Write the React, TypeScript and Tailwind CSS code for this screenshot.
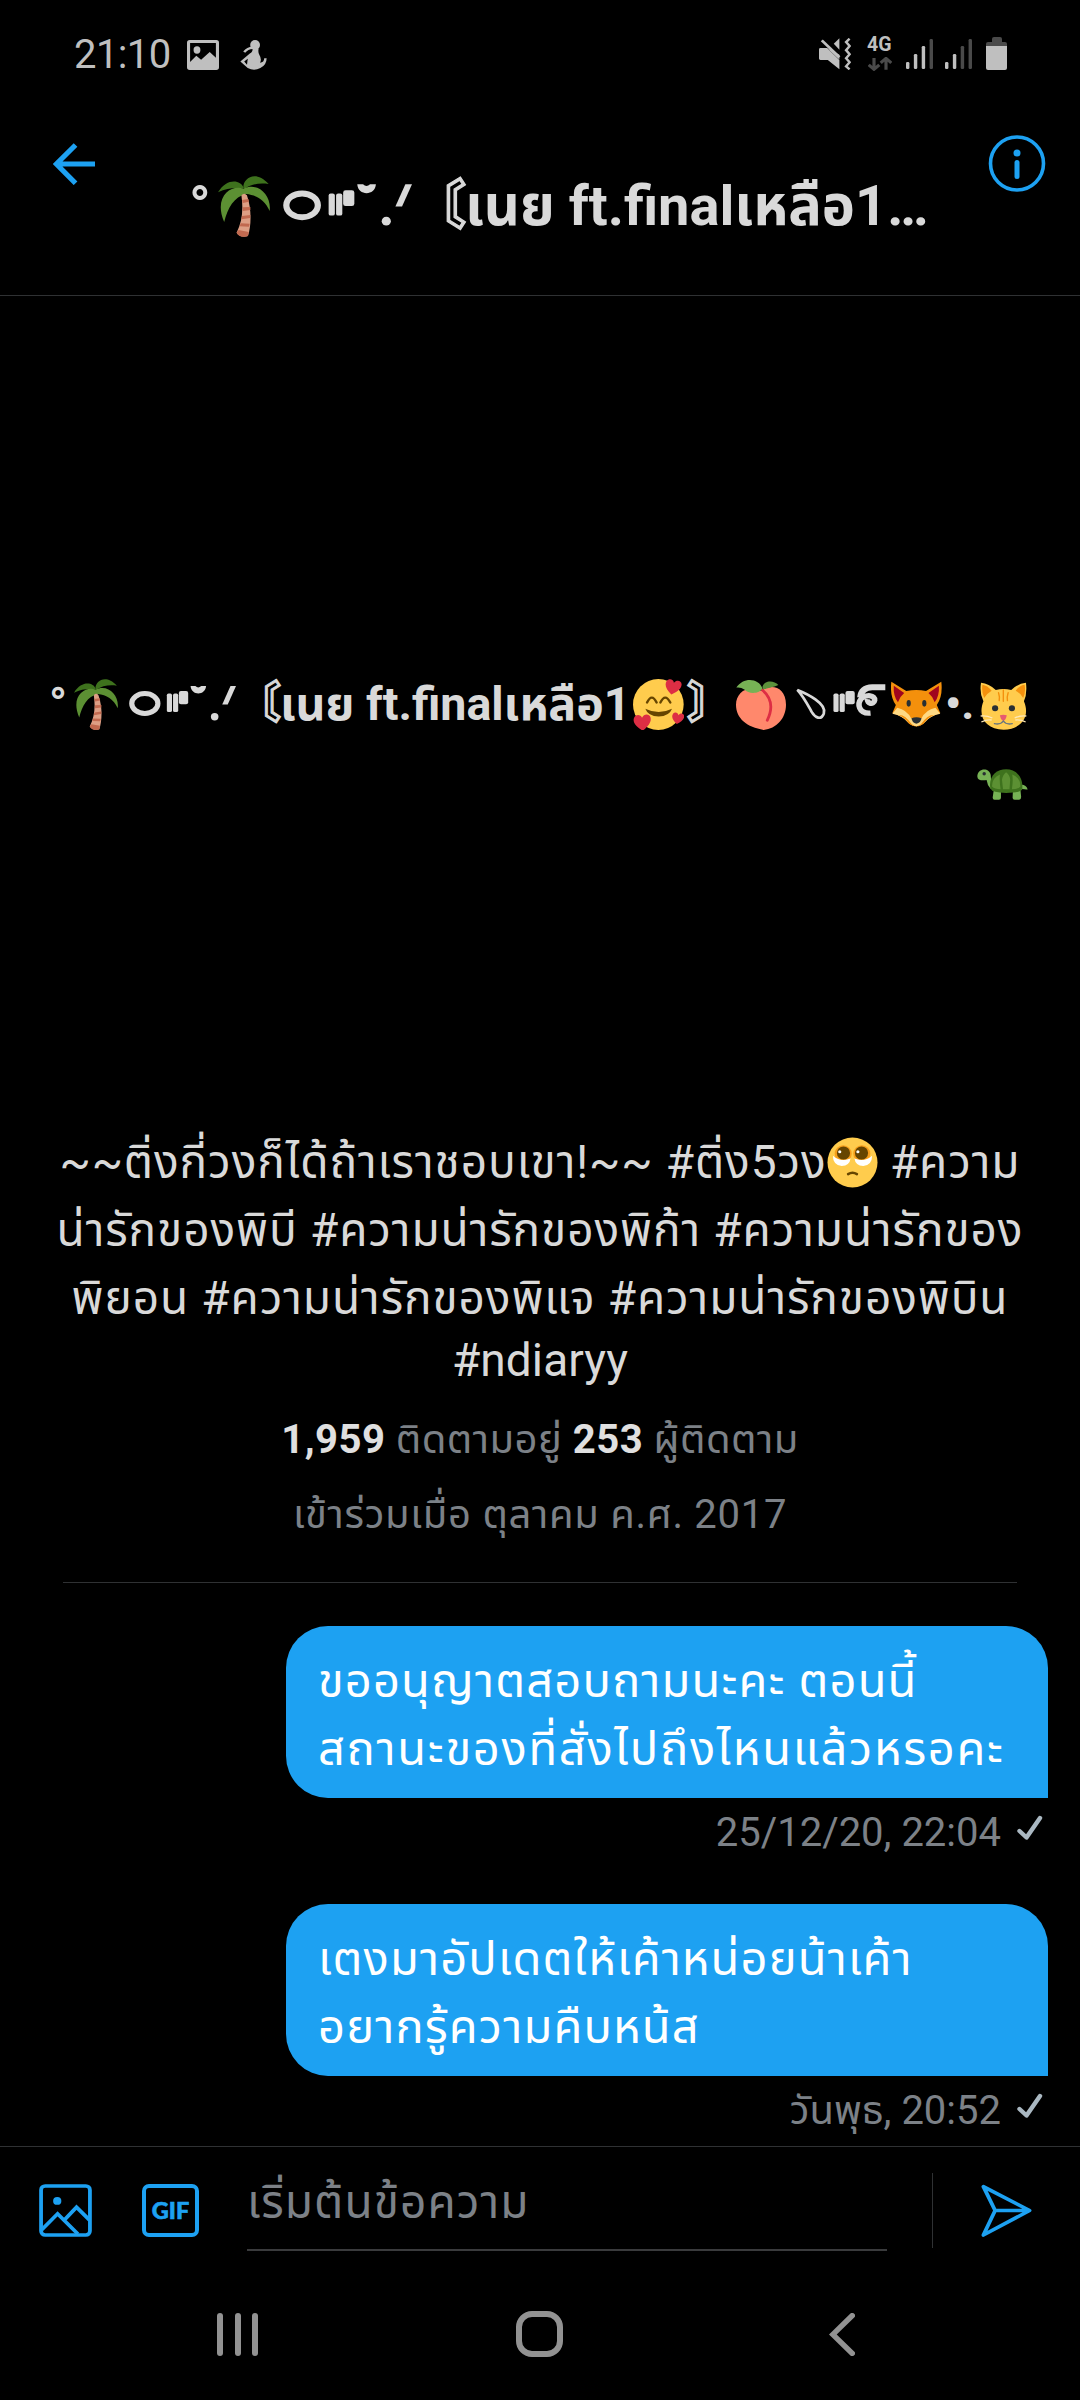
import React from 'react';

type SvgProps = { className?: string };

const Palm = ({ className }: SvgProps) => (
  <svg className={className} viewBox="634 528 151 183" fill="none" preserveAspectRatio="none">
    <path d="M708 562C700 540 660 532 634 577C660 565 685 562 708 566Z" fill="#3E721D" />
    <path d="M708 564C704 540 740 505 781 552C755 548 730 552 712 566Z" fill="#3E721D" />
    <path d="M708 566C672 552 620 590 652 666C662 625 680 590 716 582C745 585 770 600 784 633C790 585 750 545 708 566Z" fill="#5C9033" />
    <path d="M702 586C708 630 704 665 688 698C694 711 712 712 721 708C730 680 733 630 718 586Q710 576 702 586Z" fill="#DD9E84" />
    <path d="M704 600l18-3 2 8-18 4zM706 622l22-1 0 9-22 3zM704 648l24-3-1 9-25 4zM700 670l26 1-2 9-27-1zM688 698l6-8 29 6-2 12c-10 4-26 4-33-10z" fill="#C1694F" />
  </svg>
);

/* Ring, bars, breve, dot and stroke that decorate the display name. */
const Flourish = ({ className }: SvgProps) => (
  <svg className={className} viewBox="374 86 311 154" fill="#d9d9d9" preserveAspectRatio="none">
    <ellipse cx="420" cy="160" rx="38" ry="30" fill="none" stroke="#d9d9d9" strokeWidth="15" />
    <rect x="484" y="130" width="15" height="56" rx="5" />
    <rect x="502" y="130" width="15" height="56" rx="5" />
    <rect x="519" y="122" width="27" height="40" rx="6" />
    <path d="M553 107h14q8 9 17 0h14c-2 30-43 30-45 0z" />
    <circle cx="623" cy="200" r="11" />
    <path d="M669 107h16l-24 56h-16z" />
  </svg>
);

const Heart = ({ t }: { t: string }) => (
  <path transform={t} d="M0 24C-18 12-26 0-22-12C-17-24-3-22 0-12C5-23 20-24 23-12C26 1 14 14 0 24Z" fill="#DD2E44" />
);

const Smiling = ({ className }: SvgProps) => (
  <svg className={className} viewBox="270 86 149 154" fill="none" preserveAspectRatio="none">
    <ellipse cx="344" cy="163" rx="74" ry="77" fill="#FFCC4D" />
    <path d="M311 157q14-30 28 0M350 157q14-30 29 0" stroke="#664500" strokeWidth="7" strokeLinecap="round" />
    <path d="M306 176q39 20 78 0q-8 23-39 23t-39-23z" fill="#664500" />
    <Heart t="translate(387 109) rotate(12)" />
    <Heart t="translate(297 216) rotate(-3) scale(1.08)" />
    <Heart t="translate(401 204) rotate(10) scale(.75)" />
  </svg>
);

const Peach = ({ className }: SvgProps) => (
  <svg className={className} viewBox="568 86 144 154" fill="none" preserveAspectRatio="none">
    <path d="M641 122C665 100 712 106 712 164C712 206 684 236 648 240C600 232 568 206 568 164C568 125 604 102 641 122Z" fill="#FF886C" />
    <path d="M644 119q40 36 14 92" stroke="#DD2E44" strokeWidth="8" strokeLinecap="round" />
    <path d="M644 110C650 88 678 90 690 104C676 112 660 112 646 118Z" fill="#5C913B" />
    <path d="M569 112C590 78 634 84 644 114C638 130 606 134 592 118Q582 110 569 112Z" fill="#77B255" />
  </svg>
);

/* Petal, bars and curl between the peach and the fox. */
const Curl = ({ className }: SvgProps) => (
  <svg className={className} viewBox="744 86 262 154" fill="#d9d9d9" preserveAspectRatio="none">
    <path d="M748 119C775 130 835 160 825 190C817 212 800 203 790 186C775 158 765 138 748 119Z" fill="none" stroke="#d9d9d9" strokeWidth="8" />
    <rect x="853" y="130" width="15" height="56" rx="5" />
    <rect x="871" y="130" width="15" height="56" rx="5" />
    <rect x="888" y="122" width="27" height="40" rx="6" />
    <path d="M1004 111H966Q934 112 931 142" fill="none" stroke="#d9d9d9" strokeWidth="18" />
    <path d="M961 189C925 192 922 160 934 145C950 132 974 134 973 150C970 166 950 160 952 147" fill="none" stroke="#d9d9d9" strokeWidth="16" />
  </svg>
);

const Fox = ({ className }: SvgProps) => (
  <svg className={className} viewBox="1018 94 147 138" fill="none" preserveAspectRatio="none">
    <path d="M1019 96L1062 124Q1091 118 1119 124L1163 96Q1168 140 1150 166L1160 190Q1130 200 1116 214Q1091 236 1066 214Q1052 200 1022 190L1032 166Q1014 140 1019 96Z" fill="#F4900C" />
    <path d="M1026 108L1056 130Q1044 140 1038 158Q1024 138 1026 108ZM1156 108L1126 130Q1138 140 1144 158Q1158 138 1156 108Z" fill="#A0041E" />
    <path d="M1022 192L1036 174Q1064 180 1076 206H1106Q1118 180 1146 174L1160 192Q1130 198 1116 218Q1091 242 1066 218Q1052 198 1022 192Z" fill="#FFD983" />
    <path d="M1040 196Q1058 194 1078 224L1091 232L1104 224Q1124 194 1142 196Q1124 204 1112 222Q1091 238 1070 222Q1058 204 1040 196Z" fill="#F4900C" />
    <ellipse cx="1069" cy="161" rx="6" ry="10" fill="#292F33" />
    <ellipse cx="1114" cy="161" rx="6" ry="10" fill="#292F33" />
    <path d="M1077 206Q1091 200 1106 206Q1104 220 1091 222Q1079 220 1077 206Z" fill="#292F33" />
  </svg>
);

const Cat = ({ className }: SvgProps) => (
  <svg className={className} viewBox="1276 94 137 144" fill="none" preserveAspectRatio="none">
    <path d="M1279 96Q1302 98 1322 118Q1344 112 1367 118Q1388 98 1410 96Q1414 130 1404 152C1424 200 1394 236 1345 237C1294 236 1268 200 1286 152Q1274 128 1279 96Z" fill="#FFCC4D" />
    <path d="M1283 102Q1298 104 1310 120Q1296 128 1288 142Q1280 124 1283 102ZM1406 102Q1391 104 1380 120Q1394 128 1402 142Q1410 124 1406 102Z" fill="#F4900C" />
    <path d="M1344 118v34M1330 126q4 12 2 24M1358 126q-4 12-2 24" stroke="#F4900C" strokeWidth="4" strokeLinecap="round" />
    <circle cx="1320" cy="173" r="9" fill="#292F33" />
    <circle cx="1369" cy="173" r="9" fill="#292F33" />
    <path d="M1334 194q10-4 20 0q-2 14-10 17q-8-3-10-17z" fill="#E75A70" />
    <path d="M1318 219q18 4 26-8q8 12 26 8" stroke="#66757F" strokeWidth="4" strokeLinecap="round" />
    <path d="M1278 196q18-2 34 6M1280 214q14-8 30-6M1411 196q-18-2-34 6M1409 214q-14-8-30-6" stroke="#FFE8B6" strokeWidth="4" />
  </svg>
);

const Turtle = ({ className }: SvgProps) => (
  <svg className={className} viewBox="1269 356 149 92" fill="none" preserveAspectRatio="none">
    <path d="M1270 378C1270 352 1306 350 1309 374C1311 392 1309 402 1318 414L1308 414Q1299 404 1297 389Q1270 392 1270 378Z" fill="#77B255" />
    <circle cx="1290" cy="370" r="5" fill="#292F33" />
    <path d="M1398 402Q1414 404 1417 417Q1402 418 1392 410Z" fill="#77B255" />
    <path d="M1318 418h21v23q0 6-6 6h-13q-6 0-5-8zM1374 418h22l2 21q0 8-6 8h-13q-6 0-6-6z" fill="#77B255" />
    <path d="M1308 414C1302 378 1325 357 1354 357C1384 357 1405 380 1401 416Q1396 427 1354 427Q1314 427 1308 414Z" fill="#3E721D" />
    <path d="M1313 408Q1312 382 1336 372Q1334 390 1338 416Q1320 416 1313 408ZM1354 366Q1365 374 1366 388L1364 416H1345L1342 388Q1344 374 1354 366ZM1396 408Q1396 382 1372 372Q1375 390 1371 416Q1390 416 1396 408Z" fill="#5C9033" />
  </svg>
);

const Pleading = ({ className }: SvgProps) => (
  <svg className={className} viewBox="0 0 52 52" fill="none">
    <circle cx="26" cy="26" r="25.500" fill="#FFCC4D" />
    <circle cx="16.500" cy="17" r="8.700" fill="#F4900C" opacity=".75" />
    <circle cx="35.500" cy="17" r="8.700" fill="#F4900C" opacity=".75" />
    <path d="M6 19Q14 26 24 22Q23 29.500 15 29.500Q6 28.500 6 19ZM46 19Q38 26 28 22Q29 29.500 37 29.500Q46 28.500 46 19Z" fill="#fff" />
    <circle cx="16.800" cy="16.300" r="6.700" fill="#664500" />
    <circle cx="35.200" cy="16.300" r="6.700" fill="#664500" />
    <circle cx="13" cy="15" r="1.600" fill="#fff" />
    <circle cx="31.500" cy="15" r="1.600" fill="#fff" />
    <path d="M21.500 37.800Q26 35 30.500 37.800" stroke="#664500" strokeWidth="2.600" strokeLinecap="round" />
  </svg>
);

const StatusBar = () => (
  <div className="flex h-[110px] shrink-0 items-start pl-[74px] pr-[72px] pt-[36px] text-[#bfbfbf]">
    <span className="w-[113px] whitespace-nowrap text-[40px] leading-[38px] tracking-[-0.6px]">21:10</span>
    <svg className="mt-[4px] h-[30px] w-[32px]" viewBox="543 119 93 90" fill="#bfbfbf" preserveAspectRatio="none">
      <path fillRule="evenodd" d="M551 119h77q8 0 8 8v74q0 8-8 8h-77q-8 0-8-8v-74q0-8 8-8zM552 128v57l18-19 14 12 25-23 18 17v-44z" />
      <ellipse cx="572" cy="149" rx="10" ry="11" />
    </svg>
    <svg className="ml-[21px] mt-[4px] h-[30px] w-[27px]" viewBox="696 119 77 91" fill="#bfbfbf" preserveAspectRatio="none">
      <ellipse cx="739" cy="134" rx="14" ry="15" />
      <path d="M732 146h17q-2 10 2 18q8 14 2 24q12-2 12-14h7q0 20-18 30q-18 10-36 0L697 184L724 160Q732 156 732 146zM708 184l8 10 2-18z" fillRule="evenodd" />
      <path d="M708 156q10-14 26-13" stroke="#bfbfbf" strokeWidth="7" fill="none" />
    </svg>
    <div className="grow" />
    <svg className="mt-[2px] h-[32px] w-[32px]" viewBox="807 113 91 95" fill="#bfbfbf" preserveAspectRatio="none">
      <path d="M811 143h19l35 35v28l-33-28h-21q-4 0-4-4v-27q0-4 4-4z" />
      <path d="M830 143l35 20v14z" />
      <path d="M865 114v34l-16-18z" />
      <path d="M815 120l50 50" stroke="#bfbfbf" strokeWidth="8" />
      <path d="M894 115l-10 10 10 12-10 12 10 12-10 12 10 12-10 12 10 9" fill="none" stroke="#bfbfbf" strokeWidth="7" />
    </svg>
    <div className="ml-[17px] w-[26px]">
      <div className="-ml-px whitespace-nowrap text-[19.5px] font-bold leading-[18px]">4G</div>
      <svg className="mt-[3px] h-[14px] w-[24px]" viewBox="952 171 68 43" fill="none" stroke="#4a4a4a" strokeWidth="9" preserveAspectRatio="none">
        <path d="M969 174v34M954 195l15 14 15-14M1003 210v-34M988 189l15-14 15 14" />
      </svg>
    </div>
    <svg className="ml-[12px] mt-[3px] h-[30px] w-[27px]" viewBox="1062 118 79 90" fill="#bfbfbf" preserveAspectRatio="none">
      <rect x="1062" y="187" width="10" height="21" rx="4" /><rect x="1085" y="163" width="10" height="45" rx="4" />
      <rect x="1108" y="139" width="10" height="69" rx="4" /><rect x="1131" y="118" width="10" height="90" rx="4" fill="#4a4a4a" />
    </svg>
    <svg className="ml-[12px] mt-[3px] h-[30px] w-[27px]" viewBox="1062 118 79 90" fill="#bfbfbf" preserveAspectRatio="none">
      <rect x="1062" y="187" width="10" height="21" rx="4" /><rect x="1085" y="163" width="10" height="45" rx="4" />
      <rect x="1108" y="139" width="10" height="69" rx="4" fill="#4a4a4a" /><rect x="1131" y="118" width="10" height="90" rx="4" fill="#4a4a4a" />
    </svg>
    <div className="ml-[14px] mr-px mt-px flex w-[21px] flex-col items-center">
      <div className="h-[5px] w-[10px] rounded-t-[2px] bg-[#4a4a4a]" />
      <div className="h-[28px] w-full rounded-[2px] border-t-4 border-[#4a4a4a] bg-[#bfbfbf]" />
    </div>
  </div>
);

const Header = () => (
  <div className="flex h-[186px] shrink-0 items-start border-b border-[#2f3133]">
    <svg className="ml-[53px] mt-[33px] h-[42px] w-[42px]" viewBox="153 430 123 126" fill="none" stroke="#1da1f2" strokeWidth="15" preserveAspectRatio="none">
      <path d="M276 493H164M219 436L163 493L219 551" />
    </svg>
    <div className="ml-[94px] mt-[60px] flex h-[68px] w-[799px] items-start whitespace-nowrap text-[56px] font-bold leading-[72px] text-[#d9d9d9]">
      <span className="w-[29px] shrink-0">°</span>
      <Palm className="mt-[6px] h-[61px] w-[52px] shrink-0" />
      <Flourish className="ml-[13px] mt-[6px] h-[61px] w-[129px] shrink-0" />
      <span className="w-[53px] shrink-0 text-[54px] [-webkit-text-stroke:1.2px_#d9d9d9]">〘</span>
      <span>เนย ft.finalเหลือ1…</span>
    </div>
    <svg className="mt-[25px] h-[57px] w-[58px]" viewBox="0 0 58 57" fill="none">
      <circle cx="29" cy="28.500" r="26.500" stroke="#1da1f2" strokeWidth="3.600" />
      <circle cx="29" cy="18" r="3.500" fill="#1da1f2" />
      <path d="M29 27.500V41.500" stroke="#1da1f2" strokeWidth="5" strokeLinecap="round" />
    </svg>
  </div>
);

const Profile = () => (
  <div className="shrink-0 pt-[374px] text-[#d9d9d9]">
    <div className="flex h-[68px] items-start whitespace-nowrap pl-[49px] text-[46.5px] font-bold leading-[68px]">
      <span className="w-[25px] shrink-0">°</span>
      <Palm className="mt-[9px] h-[51px] w-[44px] shrink-0" />
      <Flourish className="ml-[11px] mt-[9px] h-[51px] w-[107px] shrink-0" />
      <span className="w-[44px] shrink-0 text-[45px] [-webkit-text-stroke:1px_#d9d9d9]">〘</span>
      <span className="w-[353px] shrink-0">เนย ft.finalเหลือ1</span>
      <Smiling className="mt-[9px] h-[51px] w-[51px] shrink-0" />
      <span className="ml-[3px] w-[49px] shrink-0 text-[45px] [-webkit-text-stroke:1px_#d9d9d9]">〙</span>
      <Peach className="mt-[9px] h-[51px] w-[50px] shrink-0" />
      <Curl className="ml-[10px] mt-[9px] h-[51px] w-[90px] shrink-0" />
      <Fox className="ml-[5px] mt-[11px] h-[46px] w-[51px] shrink-0" />
      <span className="ml-[3px] w-[35px] shrink-0 text-[45px]">•.</span>
      <Cat className="mt-[12px] h-[48px] w-[47px] shrink-0" />
    </div>
    <div className="flex justify-end pr-[52px] pt-[31px]">
      <Turtle className="h-[31px] w-[51px]" />
    </div>
    <div className="flex flex-col items-center whitespace-nowrap pt-[328px] text-[46px] leading-[68px] tracking-[0.9px]">
      <div className="flex h-[68px]">
        <span>~~ติ่งกี่วงก็ได้ถ้าเราชอบเขา!~~ #ติ่ง5วง</span>
        <Pleading className="mt-[9px] h-[51px] w-[51px]" />
        <span>&nbsp;#ความ</span>
      </div>
      <div>น่ารักของพิบี #ความน่ารักของพิก้า #ความน่ารักของ</div>
      <div>พิยอน #ความน่ารักของพิแจ #ความน่ารักของพิบิน</div>
      <div className="leading-[56px] tracking-[0.1px]">#ndiaryy</div>
      <div className="mt-[20px] text-[40px] leading-[64px] tracking-[0.5px] text-[#7c8187]">
        <b className="text-[#e0e0e0]">1,959</b> ติดตามอยู่ <b className="text-[#e0e0e0]">253</b> ผู้ติดตาม
      </div>
      <div className="mt-[11px] text-[40px] leading-[64px] tracking-[0.7px] text-[#7c8187]">เข้าร่วมเมื่อ ตุลาคม ค.ศ. 2017</div>
    </div>
    <div className="mx-[63px] mt-[35px] h-px bg-[#2f3133]" />
  </div>
);

const Message = ({ children, time }: { children: React.ReactNode; time: string }) => (
  <div className="flex h-[278px] shrink-0 flex-col items-end pr-[32px]">
    <div className="h-[172px] w-[762px] whitespace-nowrap rounded-[42px] rounded-br-none bg-[#1da1f2] pl-[32px] pt-[21px] text-[47px] leading-[68px] tracking-[1.15px] text-white">
      {children}
    </div>
    <div className="flex items-start pr-[5px] pt-[4px] text-[40px] leading-[62px] text-[#7c8187]">
      <span className="whitespace-nowrap">{time}</span>
      <svg className="ml-[16px] mt-[13px] h-[26px] w-[26px]" viewBox="0 0 26 26" fill="none">
        <path d="M2.500 16L9.500 22.500L23 3" stroke="#aab8c2" strokeWidth="4.400" strokeLinecap="round" strokeLinejoin="round" />
      </svg>
    </div>
  </div>
);

const Composer = () => (
  <div className="flex h-[124px] shrink-0 items-start border-t border-[#2f3133]">
    <svg className="ml-[39px] mt-[37px] h-[53px] w-[53px]" viewBox="113 161 154 160" fill="none" stroke="#1da1f2" strokeWidth="11" preserveAspectRatio="none">
      <rect x="119" y="167" width="142" height="148" rx="12" />
      <path d="M121 299L167 251L226 312M188 268L222 231L260 270" />
      <circle cx="166" cy="212" r="12" fill="#1da1f2" stroke="none" />
    </svg>
    <div className="ml-[50px] mt-[37px] flex h-[53px] w-[57px] items-center justify-center rounded-[7px] border-4 border-[#1da1f2] font-['Lato'] text-[23.5px] font-black leading-none text-[#1da1f2] [-webkit-text-stroke:0.6px_#1da1f2]">
      GIF
    </div>
    <div className="ml-[48px] h-[104px] w-[640px] whitespace-nowrap border-b-2 border-[#3a3b3d] pt-[21px] text-[46px] leading-[68px] tracking-[1.1px] text-[#7c8187]">
      เริ่มต้นข้อความ
    </div>
    <div className="ml-[45px] mt-[26px] h-[75px] w-px bg-[#2f3133]" />
    <svg className="ml-[48px] mt-[37px] h-[53px] w-[51px]" viewBox="1281 161 148 160" fill="none" stroke="#1da1f2" strokeWidth="11" strokeLinejoin="round" preserveAspectRatio="none">
      <path d="M1288 169L1422 241L1288 315L1322 241ZM1322 241H1422" />
    </svg>
  </div>
);

const NavBar = () => (
  <div className="flex grow items-start pt-[41px]">
    <div className="ml-[217px] mt-[2px] flex h-[43px] w-[41px] justify-between">
      <i className="w-[6px] rounded-full bg-[#929292]" />
      <i className="w-[6px] rounded-full bg-[#929292]" />
      <i className="w-[6px] rounded-full bg-[#929292]" />
    </div>
    <div className="ml-[258px] h-[46px] w-[47px] rounded-[16px] border-[6px] border-[#929292]" />
    <svg className="ml-[266px] mt-[2px] h-[43px] w-[26px]" viewBox="839 549 74 130" fill="none" stroke="#929292" strokeWidth="16" strokeLinecap="round" preserveAspectRatio="none">
      <path d="M905 557L850 614L905 671" />
    </svg>
  </div>
);

export default function App() {
  return (
    <div className="flex h-[2400px] w-[1080px] flex-col overflow-hidden bg-black font-['Roboto','Noto_Sans_Thai','Noto_Sans','Noto_Sans_CJK_JP',sans-serif]">
      <StatusBar />
      <Header />
      <div className="flex h-[1850px] shrink-0 flex-col overflow-hidden">
        <Profile />
        <div className="h-[43px] shrink-0" />
        <Message time="25/12/20, 22:04">
          <div>ขออนุญาตสอบถามนะคะ ตอนนี้</div>
          <div className="tracking-[1.7px]">สถานะของที่สั่งไปถึงไหนแล้วหรอคะ</div>
        </Message>
        <Message time="วันพุธ, 20:52">
          <div>เตงมาอัปเดตให้เค้าหน่อยน้าเค้า</div>
          <div>อยากรู้ความคืบหน้ส</div>
        </Message>
      </div>
      <Composer />
      <NavBar />
    </div>
  );
}
